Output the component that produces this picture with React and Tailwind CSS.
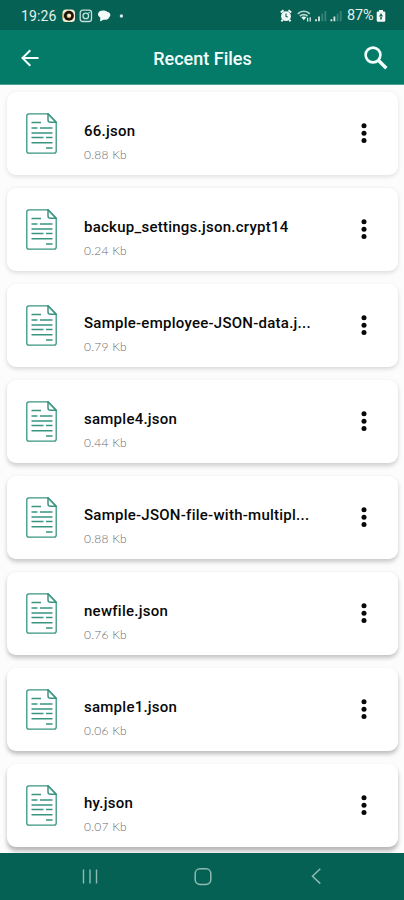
import React from 'react';

const files = [
    { name: '66.json', size: '0.88 Kb' },
    { name: 'backup_settings.json.crypt14', size: '0.24 Kb' },
    { name: 'Sample-employee-JSON-data.j...', size: '0.79 Kb' },
    { name: 'sample4.json', size: '0.44 Kb' },
    { name: 'Sample-JSON-file-with-multipl...', size: '0.88 Kb' },
    { name: 'newfile.json', size: '0.76 Kb' },
    { name: 'sample1.json', size: '0.06 Kb' },
    { name: 'hy.json', size: '0.07 Kb' },
];

function StatusBar() {
    return (
        <div className="h-[30px] shrink-0 bg-[#046153] flex items-center justify-between pl-[21px] pr-[18px] pt-[2px] text-[#e3f0ed]">
            <div className="flex items-center">
                <span className="w-[41px] text-[14px] leading-none tracking-[0.1px]">19:26</span>
                <svg width="64" height="14" viewBox="0 0 64 14" fill="none">
                    <rect x="0.5" y="0.5" width="12.5" height="12.5" rx="3.5" fill="#f7ecd0" />
                    <circle cx="6.9" cy="6.7" r="5" fill="#1b140d" />
                    <path d="M1.3 9V4.5" stroke="#eeb63c" strokeWidth="1.3" />
                    <circle cx="7" cy="6.7" r="2.3" fill="#e9bd63" />
                    <circle cx="7.3" cy="6.5" r="1.3" fill="#fff" />
                    <rect x="18.2" y="1.2" width="11.3" height="11.3" rx="2.5" stroke="#c4e0da" strokeWidth="1.3" />
                    <circle cx="23.8" cy="6.9" r="2.8" stroke="#c4e0da" strokeWidth="1.3" />
                    <circle cx="27.1" cy="3.7" r="0.8" fill="#c4e0da" />
                    <path d="M41 1.5C38 1.5 36 2.9 36 5.2C36 6.6 36.8 7.7 38.2 8.4V12.5L41.5 10.7C44 11.3 46.5 10.3 47.2 8.2C48 7.6 48.3 6.9 48.3 6C48.3 4.3 47.3 3.2 45.4 3C44.5 2 43 1.5 41 1.5Z" fill="#f4fbf9" />
                    <circle cx="59.4" cy="7" r="1.7" fill="#d9ebe7" />
                </svg>
            </div>
            <div className="flex items-center">
                <svg width="62" height="14" viewBox="0 0 62 14" fill="none" className="mr-[5px]">
                    <circle cx="6" cy="7.2" r="4.9" fill="#f1f8f6" />
                    <path d="M0.8 3.6L3.6 1.3M11.2 3.6L8.4 1.3M2.6 10.8L1.5 12.4M9.4 10.8L10.5 12.4" stroke="#f1f8f6" strokeWidth="1.9" />
                    <path d="M6 4.6V7.5L7.8 8.1" stroke="#0a6656" strokeWidth="1.1" />
                    <path d="M17.8 4.8C21.1 1.4 26.5 1.4 29.8 4.8M19.8 7.1C22 5 25.6 5 27.6 7.1" stroke="#b5d5ce" strokeWidth="1.7" />
                    <path d="M21.3 8.3C22.6 7.3 25 7.3 26.3 8.3L23.8 11.3Z" fill="#e9f4f1" />
                    <path d="M27.6 12.5V8.8M30.2 8.3V12.5" stroke="#d8ebe6" strokeWidth="1.3" />
                    <path d="M36 12.3V10.3M39 12.3V7.5" stroke="#d5e8e4" strokeWidth="1.8" />
                    <path d="M42.3 12.3V4.5M45.4 12.3V2" stroke="#38857a" strokeWidth="1.8" />
                    <path d="M51.4 12.3V10.3M54.4 12.3V7.5" stroke="#d5e8e4" strokeWidth="1.8" />
                    <path d="M57.6 12.3V4.5M60.7 12.3V2" stroke="#38857a" strokeWidth="1.8" />
                </svg>
                <span className="w-[28px] text-[14.5px] leading-none tracking-[-0.1px]">87%</span>
                <svg width="10" height="14" viewBox="0 0 10 14" className="ml-[1px]">
                    <path d="M3 1h4v1.5h1q1.300 0 1.300 1v8q0 1.200-1.200 1.200H2Q0.700 12.700 0.700 11.500v-8q0-1 1.300-1h1z" fill="#f4faf8" />
                    <path d="M5 4L3 7.500h4zM4.200 7h1.600v3.500H4.200z" fill="#125f53" />
                </svg>
            </div>
        </div>
    );
}

function Header() {
    return (
        <div className="h-[55px] shrink-0 bg-[#047a69] flex items-center justify-between pl-[21px] pr-[16px] text-[#f5fffd] border-b border-[#4fa094]">
            <svg width="18" height="18" viewBox="0 0 18 18" fill="none" stroke="currentColor" strokeWidth="2" className="mt-[1px]">
                <path d="M17.5 9H2M9.3 1.2L1.5 9L9.3 16.8" />
            </svg>
            <h1 className="font-['Roboto'] font-medium text-[18px] leading-none whitespace-nowrap ml-[2px] mt-[3px]">Recent Files</h1>
            <svg width="24" height="24" viewBox="0 0 24 24" fill="none" stroke="currentColor" className="mt-[2px]">
                <circle cx="9" cy="9" r="7.4" strokeWidth="2.6" />
                <path d="M14.3 14.3L22.3 22.3" strokeWidth="3.4" />
            </svg>
        </div>
    );
}

function FileIcon() {
    return (
        <svg width="31" height="41" viewBox="0 0 31 41" fill="none" stroke="#389581" strokeWidth="1.3" className="shrink-0">
            <path d="M22 0.8H3Q0.8 0.8 0.8 3V38Q0.8 40.2 3 40.2H28Q30.2 40.2 30.2 38V9.3Z" />
            <path d="M22 0.8V7Q22 9.3 24.3 9.3H30.2Z" strokeWidth="1.5" />
            <path d="M5.5 9.5H15M5.5 15H11.5M14 15H26.5M5.5 20H26.5M5.5 24.5H17.5M20 24.5H26.5M5.5 29.8H26.5M20 35H26.5" strokeWidth="1.4" />
        </svg>
    );
}

function FileCard({ file, index }) {
    // cards further down the list cast a deeper shadow
    const depth = 0.1 + index * 0.025;
    return (
        <div
            className="h-[83px] shrink-0 rounded-[9px] bg-white flex items-center pl-[19px] pr-[31px]"
            style={{ boxShadow: `0 ${1.5 + index * 0.25}px 4px rgba(0,0,0,${depth})` }}
        >
            <FileIcon />
            <div className="ml-[27px] mt-[16px] flex-1 min-w-0">
                <p className="font-['Roboto'] font-medium text-[15px] leading-[20px] tracking-[0.25px] text-[#080808] whitespace-nowrap">{file.name}</p>
                <p className="font-['Lato'] font-light text-[12px] leading-[16px] mt-[6px] tracking-[0.25px] text-[#6c6c6c] whitespace-nowrap">{file.size}</p>
            </div>
            <svg width="6" height="21" viewBox="0 0 6 21" fill="#080808" className="shrink-0">
                <circle cx="3" cy="2.8" r="2.5" />
                <circle cx="3" cy="10.2" r="2.5" />
                <circle cx="3" cy="17.6" r="2.5" />
            </svg>
        </div>
    );
}

function NavBar() {
    return (
        <div className="h-[47px] shrink-0 bg-[#046153] flex items-center justify-between pl-[82px] pr-[82px]">
            <svg width="16" height="16" viewBox="0 0 16 16" stroke="#8fbbb2" strokeWidth="1.4">
                <path d="M1.5 0.5V14.5M8 0.5V14.5M14.5 0.5V14.5" />
            </svg>
            <svg width="18" height="18" viewBox="0 0 18 18" fill="none" stroke="#8fbbb2" strokeWidth="1.5" className="mr-[4px]">
                <rect x="1.2" y="0.8" width="15.6" height="15.6" rx="4.8" />
            </svg>
            <svg width="11" height="17" viewBox="0 0 11 17" fill="none" stroke="#8fbbb2" strokeWidth="1.5">
                <path d="M9.3 0.8L1.5 8.2L9.3 15.6" />
            </svg>
        </div>
    );
}

export default function App() {
    return (
        <div className="w-[404px] h-[900px] flex flex-col overflow-hidden bg-[#fcfcfc] font-['Roboto',sans-serif]">
            <StatusBar />
            <Header />
            <div className="flex-1 min-h-0 overflow-hidden flex flex-col gap-[13px] pt-[7px] pl-[7px] pr-[6px]">
                {files.map((file, i) => (
                    <FileCard key={i} file={file} index={i} />
                ))}
            </div>
            <NavBar />
        </div>
    );
}
